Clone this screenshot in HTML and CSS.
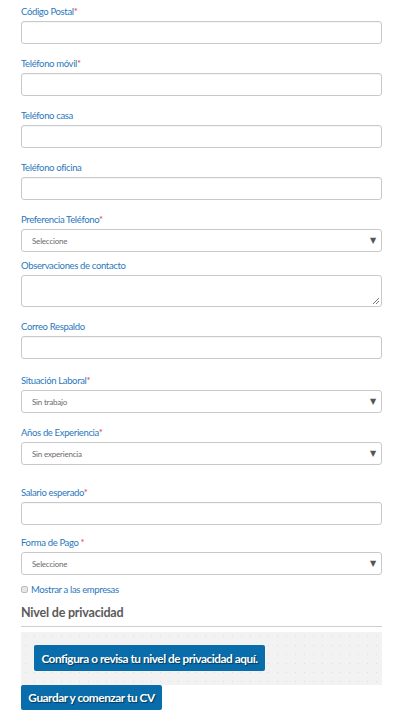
FILE: index.html
```html
<!DOCTYPE html>
<html lang="es">
<head>
<meta charset="utf-8">
<title>Formulario</title>
<link rel="stylesheet" href="styles.css">
</head>
<body>
<form class="form">
  <div class="field">
    <label class="label">Código Postal<span class="req">*</span></label>
    <input class="input" type="text">
  </div>
  <div class="field">
    <label class="label">Teléfono móvil<span class="req">*</span></label>
    <input class="input" type="text">
  </div>
  <div class="field">
    <label class="label">Teléfono casa</label>
    <input class="input" type="text">
  </div>
  <div class="field">
    <label class="label">Teléfono oficina</label>
    <input class="input" type="text">
  </div>
  <div class="field field-tight">
    <label class="label">Preferencia Teléfono<span class="req">*</span></label>
    <div class="select"><span>Seleccione</span><span class="arrow">▼</span></div>
  </div>
  <div class="field">
    <label class="label">Observaciones de contacto</label>
    <div class="textarea">
      <svg class="grip" width="8" height="8" viewBox="0 0 8 8"><path d="M7 1 L1 7 M7 4 L4 7" stroke="#777" stroke-width="1" fill="none"/></svg>
    </div>
  </div>
  <div class="field field-wide">
    <label class="label">Correo Respaldo</label>
    <input class="input" type="text">
  </div>
  <div class="field">
    <label class="label">Situación Laboral<span class="req">*</span></label>
    <div class="select"><span>Sin trabajo</span><span class="arrow">▼</span></div>
  </div>
  <div class="field field-xwide">
    <label class="label">Años de Experiencia<span class="req">*</span></label>
    <div class="select"><span>Sin experiencia</span><span class="arrow">▼</span></div>
  </div>
  <div class="field field-narrow">
    <label class="label">Salario esperado<span class="req">*</span></label>
    <input class="input" type="text">
  </div>
  <div class="field field-tight">
    <label class="label">Forma de Pago <span class="req">*</span></label>
    <div class="select"><span>Seleccione</span><span class="arrow">▼</span></div>
  </div>
  <div class="check-row">
    <span class="checkbox"></span>
    <span class="check-label">Mostrar a las empresas</span>
  </div>
  <h3 class="section-title">Nivel de privacidad</h3>
  <div class="privacy-box">
    <button type="button" class="btn btn-privacy">Configura o revisa tu nivel de privacidad aquí.</button>
  </div>
  <button type="button" class="btn btn-save">Guardar y comenzar tu CV</button>
</form>
</body>
</html>
```

FILE: styles.css
```css
html, body {
  margin: 0;
  padding: 0;
  background: #ffffff;
}

body {
  font-family: Lato, "Open Sans", sans-serif;
}

.form {
  width: 361px;
  padding: 5px 0 0 21px;
}

.field {
  margin-bottom: 13px;
}

.field-tight { margin-bottom: 7px; }
.field-wide { margin-bottom: 15px; }
.field-xwide { margin-bottom: 21px; }
.field-narrow { margin-bottom: 11px; }

.label {
  display: block;
  font-size: 9.5px;
  line-height: 14px;
  height: 14px;
  margin-bottom: 2px;
  color: #2a78bd;
  letter-spacing: -0.35px;
}

.req {
  color: #e8404f;
}

.input {
  display: block;
  box-sizing: border-box;
  width: 361px;
  height: 23px;
  margin: 0;
  padding: 0 8px;
  border: 1px solid #c9c9c9;
  border-radius: 3px;
  background: #ffffff;
  box-shadow: inset 0 1px 1px rgba(0, 0, 0, 0.04);
}

.select {
  display: flex;
  align-items: center;
  justify-content: space-between;
  box-sizing: border-box;
  width: 361px;
  height: 23px;
  padding: 0 5px 0 10px;
  border: 1px solid #c9c9c9;
  border-radius: 3px;
  background: #ffffff;
  font-size: 8px;
  color: #6b6b6b;
  letter-spacing: -0.2px;
}

.arrow {
  font-size: 8px;
  color: #555555;
  font-family: "DejaVu Sans", sans-serif;
}

.textarea {
  position: relative;
  box-sizing: border-box;
  width: 361px;
  height: 32px;
  border: 1px solid #c9c9c9;
  border-radius: 3px;
  background: #ffffff;
}

.grip {
  position: absolute;
  right: 1px;
  bottom: 1px;
}

.check-row {
  display: flex;
  align-items: center;
  height: 14px;
  margin-bottom: 9px;
}

.checkbox {
  box-sizing: border-box;
  width: 7px;
  height: 7px;
  margin-right: 3px;
  border: 1px solid #bdbdbd;
  border-radius: 2px;
  background: #e6e6e6;
}

.check-label {
  font-size: 9.5px;
  color: #2a78bd;
  letter-spacing: -0.35px;
}

.section-title {
  margin: 0 0 5px 0;
  padding-bottom: 5px;
  border-bottom: 1px solid #cfcfcf;
  font-size: 12.5px;
  line-height: 16px;
  font-weight: 700;
  color: #5a5a5a;
  letter-spacing: -0.2px;
}

.privacy-box {
  box-sizing: border-box;
  height: 53px;
  padding: 13px 0 0 13px;
  background-color: #f2f2f2;
  background-image: radial-gradient(circle, #dddddd 0.6px, transparent 0.8px);
  background-size: 9px 9px;
}

.btn {
  display: block;
  margin: 0;
  border: none;
  border-radius: 2px;
  background: #0a6dab;
  color: #ffffff;
  font-family: Lato, "Open Sans", sans-serif;
  font-weight: 700;
  font-size: 11.8px;
  letter-spacing: -0.45px;
  text-shadow: 1px 1px 1px rgba(0, 0, 0, 0.5);
  padding: 0;
  text-align: center;
}

.btn-privacy {
  width: 231px;
  height: 26px;
}

.btn-save {
  width: 141px;
  height: 25px;
}
```
